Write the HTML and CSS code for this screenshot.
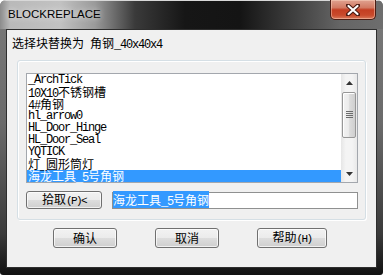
FILE: index.html
```html
<!DOCTYPE html>
<html lang="zh-CN">
<head>
    <meta charset="UTF-8">
    <title>BLOCKREPLACE</title>
    <link rel="stylesheet" href="styles.css">
</head>
<body>
    <div class="window">
        <div class="titlebar">
            <span class="title">BLOCKREPLACE</span>
            <button class="close" title="关闭">
                <svg width="14" height="12" viewBox="0 0 14 12">
                    <path d="M2 1.5 L12 10.5 M12 1.5 L2 10.5" stroke="#4a1a12" stroke-width="4.2" stroke-linecap="round"/>
                    <path d="M2.5 2 L11.5 10 M11.5 2 L2.5 10" stroke="#fff" stroke-width="2.2" stroke-linecap="round"/>
                </svg>
            </button>
        </div>

        <div class="client">
            <div class="prompt">选择块替换为<span class="en"> </span>角钢<span class="en">_40x40x4</span></div>

            <div class="group">
                <div class="list">
                    <ul class="items">
                        <li class="en">_ArchTick</li>
                        <li><span class="en">10X10</span>不锈钢槽</li>
                        <li><span class="en">4#</span>角钢</li>
                        <li class="en">hl_arrow0</li>
                        <li class="en">HL_Door_Hinge</li>
                        <li class="en">HL_Door_Seal</li>
                        <li class="en">YQTICK</li>
                        <li>灯<span class="en">_</span>圆形筒灯</li>
                        <li class="selected">海龙工具<span class="en">_5</span>号角钢</li>
                    </ul>
                    <div class="scrollbar">
                        <div class="sb-btn">
                            <svg width="7" height="4" viewBox="0 0 7 4"><path d="M3.5 0 L7 4 L0 4 Z" fill="#333"/></svg>
                        </div>
                        <div class="sb-track">
                            <div class="thumb">
                                <svg width="7" height="8" viewBox="0 0 7 8">
                                    <path d="M0 0.5 H7 M0 2.5 H7 M0 4.5 H7 M0 6.5 H7" stroke="#6c6c6c" stroke-width="1"/>
                                </svg>
                            </div>
                        </div>
                        <div class="sb-btn">
                            <svg width="7" height="4" viewBox="0 0 7 4"><path d="M0 0 L7 0 L3.5 4 Z" fill="#333"/></svg>
                        </div>
                    </div>
                </div>

                <div class="pick-row">
                    <button class="btn pick">拾取<span class="en">(P)&lt;</span></button>
                    <div class="field"><span class="hl">海龙工具<span class="en">_5</span>号角钢</span></div>
                </div>
            </div>

            <div class="actions">
                <button class="btn ok">确认</button>
                <button class="btn cancel">取消</button>
                <button class="btn help">帮助<span class="en">(H)</span></button>
            </div>
        </div>
    </div>
</body>
</html>
```

FILE: styles.css
```css
body {
    margin: 0;
    background: #ffffff;
    font-family: "Noto Sans CJK SC", sans-serif;
    font-size: 12px;
    color: #000;
}
.window {
    width: 383px;
    height: 275px;
    box-sizing: border-box;
    display: flex;
    flex-direction: column;
    border-radius: 6px 6px 3px 3px;
    overflow: hidden;
    background: linear-gradient(180deg, #7a7a7a 0, #6a6a6a 45%, #3a3a3a 85%, #111 100%);
}
.en {
    font-family: "Liberation Mono", monospace;
    font-size: 12px;
    letter-spacing: -1.2px;
}
.btn .en {
    font-size: 11px;
    letter-spacing: -1.6px;
}

/* title bar */
.titlebar {
    height: 29px;
    flex: none;
    display: flex;
    border-top: 1px solid #d8d8d8;
    box-sizing: border-box;
    background: linear-gradient(90deg, #8c8c8c 0, #b9b9b9 10px, #c2c2c2 60px, #9a9a9a 95px, #3a3a3a 135px, #161616 185px, #141414 240px, #3c3c3c 290px, #656565 340px, #6e6e6e 383px);
}
.title {
    font-family: "Liberation Sans", sans-serif;
    font-size: 11.5px;
    line-height: 27px;
    padding-left: 8px;
    padding-bottom: 1px;
    text-shadow: 0 0 6px rgba(255,255,255,0.9);
}
.close {
    margin-left: auto;
    margin-right: 7px;
    margin-top: -1px;
    width: 46px;
    height: 20px;
    padding: 0;
    border: 1px solid #4c1d14;
    border-top: none;
    border-radius: 0 0 5px 5px;
    background: linear-gradient(180deg, #e0a290 0, #d27a63 40%, #c43e22 52%, #c94a2c 80%, #d97a5c 100%);
    box-shadow: inset 0 0 0 1px rgba(255,220,200,0.45);
    display: flex;
    align-items: center;
    justify-content: center;
}

/* client area */
.client {
    flex: 1;
    margin: 0 6px 7px;
    background: #f0f0f0;
    border: 1px solid #2e2e2e;
}
.prompt {
    margin: 6px 0 0 5px;
    line-height: 14px;
    white-space: pre;
}
.group {
    margin: 8px 0 0 10px;
    width: 349px;
    height: 160px;
    box-sizing: border-box;
    border: 1px solid #d5dfe5;
    border-radius: 3px;
    box-shadow: inset 1px 1px 0 #fff, 1px 1px 0 #fff;
    padding: 12px 7px 0 8px;
}
.list {
    height: 110px;
    box-sizing: border-box;
    border: 1px solid #a3a7ad;
    background: #fff;
    display: flex;
}
.items {
    flex: 1;
    list-style: none;
    margin: 0;
    padding: 0;
}
.items li {
    height: 12px;
    line-height: 12px;
    padding-left: 1px;
    white-space: pre;
}
.items li.selected {
    background: #3399ff;
    color: #fff;
}
.scrollbar {
    width: 16px;
    display: flex;
    flex-direction: column;
    background: linear-gradient(90deg, #e6e6e6, #f4f4f4 30%, #f4f4f4 70%, #e9e9e9);
}
.sb-btn {
    height: 17px;
    display: flex;
    align-items: center;
    justify-content: center;
}
.sb-track {
    flex: 1;
    padding: 1px 1px 0;
}
.thumb {
    height: 46px;
    box-sizing: border-box;
    border: 1px solid #979797;
    border-radius: 2px;
    background: linear-gradient(90deg, #f2f2f2 0, #ececec 45%, #dcdcdc 55%, #cfcfcf 100%);
    box-shadow: inset 1px 1px 0 #fff;
    display: flex;
    align-items: center;
    justify-content: center;
}
.pick-row {
    margin-top: 8px;
    display: flex;
    gap: 10px;
}
.field {
    margin-top: 1px;
    width: 246px;
    height: 17px;
    box-sizing: border-box;
    border: 1px solid #8f9090;
    background: #fff;
    line-height: 13px;
    white-space: pre;
}
.hl {
    background: #3399ff;
    color: #fff;
}

/* buttons */
.btn {
    height: 18px;
    padding: 0;
    border: 1px solid #707070;
    border-radius: 3px;
    background: linear-gradient(180deg, #f2f2f2 0, #ebebeb 50%, #dddddd 51%, #cfcfcf 100%);
    box-shadow: inset 0 0 0 1px rgba(255,255,255,0.7);
    font-family: "Noto Sans CJK SC", sans-serif;
    font-size: 12px;
    line-height: 14px;
    color: #000;
    white-space: pre;
}
.pick {
    width: 76px;
}
.actions {
    margin-top: 8px;
    padding-left: 46px;
    display: flex;
    gap: 38px;
}
.actions .btn {
    height: 20px;
    width: 64px;
}
.actions .help {
    width: 70px;
}
```
